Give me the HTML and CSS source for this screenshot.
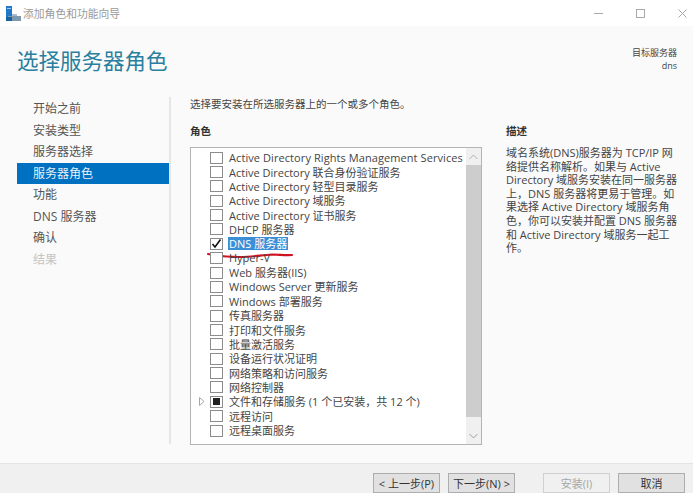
FILE: index.html
```html
<!DOCTYPE html>
<html lang="zh-CN">
<head>
<meta charset="utf-8">
<title>添加角色和功能向导</title>
<link rel="stylesheet" href="styles.css">
</head>
<body>
<div class="window">
  <header class="titlebar">
    <svg class="app-icon" width="15" height="15" viewBox="0 0 15 15"><rect x="0" y="0" width="6" height="11" fill="#1f78c8"/><rect x="1" y="2" width="4" height="1" fill="#9cc8ee"/><rect x="2" y="10" width="13" height="5" fill="#7d99ad"/><rect x="6" y="8" width="5" height="2" fill="#a9bccb"/><rect x="0" y="11" width="6" height="4" fill="#17619f"/></svg>
    <span class="window-title">添加角色和功能向导</span>
    <div class="window-controls">
      <svg width="9" height="9" viewBox="0 0 9 9"><path d="M0 4.5H9" stroke="#a8a8a8" fill="none"/></svg>
      <svg width="9" height="9" viewBox="0 0 9 9"><rect x=".5" y=".5" width="8" height="8" stroke="#a8a8a8" fill="none"/></svg>
      <svg width="9" height="9" viewBox="0 0 9 9"><path d="M.5 .5L8.5 8.5M8.5 .5L.5 8.5" stroke="#a8a8a8" fill="none"/></svg>
    </div>
  </header>
  <div class="body">
    <div class="head">
      <h1 class="page-title">选择服务器角色</h1>
      <div class="target"><div>目标服务器</div><div>dns</div></div>
    </div>
    <div class="main">
      <nav class="steps">
        <div class="step">开始之前</div>
        <div class="step">安装类型</div>
        <div class="step">服务器选择</div>
        <div class="step current">服务器角色</div>
        <div class="step">功能</div>
        <div class="step">DNS 服务器</div>
        <div class="step">确认</div>
        <div class="step muted">结果</div>
      </nav>
      <section class="content">
        <p class="intro">选择要安装在所选服务器上的一个或多个角色。</p>
        <div class="columns">
          <div class="roles">
            <h2 class="label">角色</h2>
            <div class="listbox">
              <ul class="rows">
                <li class="row"><span class="box"></span><span class="wide">Active Directory Rights Management Services</span></li>
                <li class="row"><span class="box"></span><span>Active Directory 联合身份验证服务</span></li>
                <li class="row"><span class="box"></span><span>Active Directory 轻型目录服务</span></li>
                <li class="row"><span class="box"></span><span>Active Directory 域服务</span></li>
                <li class="row"><span class="box"></span><span>Active Directory 证书服务</span></li>
                <li class="row"><span class="box"></span><span>DHCP 服务器</span></li>
                <li class="row"><span class="box checked"><svg width="11" height="11" viewBox="0 0 11 11"><path d="M1.5 6L4 9L9.5 1.5" stroke="#111" stroke-width="1.6" fill="none"/></svg></span><span class="selected">DNS 服务器</span>
                  <svg class="scribble" width="86" height="8" viewBox="0 0 86 8"><path d="M1 2C10 4 20 5 33 5C45 5 55 3 65 2.5C72 2.5 78 3.5 85 3" stroke="#cf1420" stroke-width="2.2" fill="none" stroke-linecap="round"/></svg>
                </li>
                <li class="row"><span class="box"></span><span>Hyper-V</span></li>
                <li class="row"><span class="box"></span><span>Web 服务器(IIS)</span></li>
                <li class="row"><span class="box"></span><span>Windows Server 更新服务</span></li>
                <li class="row"><span class="box"></span><span>Windows 部署服务</span></li>
                <li class="row"><span class="box"></span><span>传真服务器</span></li>
                <li class="row"><span class="box"></span><span>打印和文件服务</span></li>
                <li class="row"><span class="box"></span><span>批量激活服务</span></li>
                <li class="row"><span class="box"></span><span>设备运行状况证明</span></li>
                <li class="row"><span class="box"></span><span>网络策略和访问服务</span></li>
                <li class="row"><span class="box"></span><span>网络控制器</span></li>
                <li class="row"><svg class="expander" width="6" height="9" viewBox="0 0 6 9"><path d="M.5 .5L5 4.5L.5 8.5Z" stroke="#a6a6a6" fill="#fff"/></svg><span class="box partial"><i></i></span><span>文件和存储服务 (1 个已安装，共 12 个)</span></li>
                <li class="row"><span class="box"></span><span>远程访问</span></li>
                <li class="row"><span class="box"></span><span>远程桌面服务</span></li>
              </ul>
              <div class="scrollbar">
                <div class="arrow"><svg width="9" height="6" viewBox="0 0 9 6"><path d="M.5 5L4.5 1L8.5 5" stroke="#b0b0b0" fill="none"/></svg></div>
                <div class="thumb"></div>
                <div class="arrow"><svg width="9" height="6" viewBox="0 0 9 6"><path d="M.5 1L4.5 5L8.5 1" stroke="#a0a0a0" fill="none"/></svg></div>
              </div>
            </div>
          </div>
          <aside class="desc">
            <h2 class="label">描述</h2>
            <p class="desc-text">域名系统(DNS)服务器为 TCP/IP 网络提供名称解析。如果与 Active Directory 域服务安装在同一服务器上，DNS 服务器将更易于管理。如果选择 Active Directory 域服务角色，你可以安装并配置 DNS 服务器和 Active Directory 域服务一起工作。</p>
          </aside>
        </div>
      </section>
    </div>
  </div>
  <footer class="footer">
    <button class="btn">&lt; 上一步(P)</button>
    <button class="btn">下一步(N) &gt;</button>
    <button class="btn disabled gap-left">安装(I)</button>
    <button class="btn">取消</button>
  </footer>
</div>
</body>
</html>
```
FILE: styles.css
```css
* { box-sizing: border-box; }
html, body { margin: 0; height: 100%; }
body { font-family: "Open Sans", "Noto Sans CJK SC", sans-serif; font-size: 12px; color: #3c3c3c; background: #fafafa; overflow: hidden; }
.window { width: 693px; height: 493px; display: flex; flex-direction: column; }
.titlebar { height: 26px; flex: none; background: #fff; display: flex; align-items: center; padding-left: 6px; }
.app-icon { flex: none; margin-right: 2px; }
.window-title { font-size: 10.8px; color: #9a9a9a; }
.window-controls { margin-left: auto; display: flex; gap: 33px; padding-right: 6px; align-items: center; }
.body { flex: 1; display: flex; flex-direction: column; min-height: 0; }
.head { height: 71px; flex: none; display: flex; justify-content: space-between; padding: 20px 16px 0 17px; }
.page-title { margin: 0; font-size: 21.5px; line-height: 30px; font-weight: 400; color: #2a7f9e; }
.target { margin-top: 1px; text-align: right; font-size: 9px; line-height: 12.5px; color: #444; }
.main { flex: 1; display: flex; min-height: 0; padding-bottom: 19px; }
.steps { width: 154px; margin-left: 17px; flex: none; border-right: 2px solid #e6e6e6; padding-top: 1px; }
.step { height: 21.5px; line-height: 21px; padding-left: 16px; font-size: 12px; color: #555; }
.step.current { background: #0070c0; color: #e8f2fa; }
.step.muted { color: #c4c4c4; }
.content { flex: 1; padding: 0 0 0 19px; min-width: 0; }
.intro { margin: 0; font-size: 10.5px; line-height: 14px; color: #444; }
.columns { display: flex; margin-top: 13px; }
.roles { width: 292px; flex: none; }
.label { margin: 0; font-size: 10.5px; line-height: 14px; font-weight: 700; color: #333; }
.listbox { margin-top: 9px; height: 298px; border: 1px solid #b4b4b4; background: #fff; display: flex; }
.rows { list-style: none; margin: 0; padding: 2px 0 0 0; flex: 1; min-width: 0; }
.row { position: relative; height: 14.37px; display: flex; align-items: center; padding-left: 19px; font-size: 11px; color: #444; white-space: nowrap; }
.wide { letter-spacing: .08px; }
.box { width: 13px; height: 12px; border: 1px solid #8c8c8c; background: #fff; flex: none; margin-right: 6px; margin-top: 1px; display: flex; align-items: center; justify-content: center; }
.box.partial i { width: 7px; height: 7px; background: #222; display: block; }
.selected { background: #3b8fd6; color: #fff; margin-left: -1px; padding: 0 1px; line-height: 13px; }
.scribble { position: absolute; left: 16px; top: 16px; }
.expander { position: absolute; left: 8px; top: 3px; }
.scrollbar { width: 15px; flex: none; background: #f0f0f0; display: flex; flex-direction: column; }
.arrow { height: 17px; display: flex; align-items: center; justify-content: center; flex: none; }
.thumb { flex: 1; background: #cdcdcd; margin-bottom: 10px; }
.desc { width: 172px; margin-left: 24px; flex: none; }
.desc-text { margin: 8px 0 0; font-size: 11px; line-height: 13.6px; color: #444; }
.footer { height: 30px; flex: none; background: #f0f0f0; border-top: 1px solid #e4e4e4; display: flex; align-items: flex-start; padding: 9px 0 0 373px; gap: 8px; }
.btn { width: 67px; height: 20px; border: 1px solid #adadad; background: #e1e1e1; font: inherit; font-size: 11px; line-height: 17px; color: #333; padding: 0; }
.btn.disabled { background: #f0f0f0; border-color: #d0d0d0; color: #a6a6a6; }
.gap-left { margin-left: 20px; }
```
